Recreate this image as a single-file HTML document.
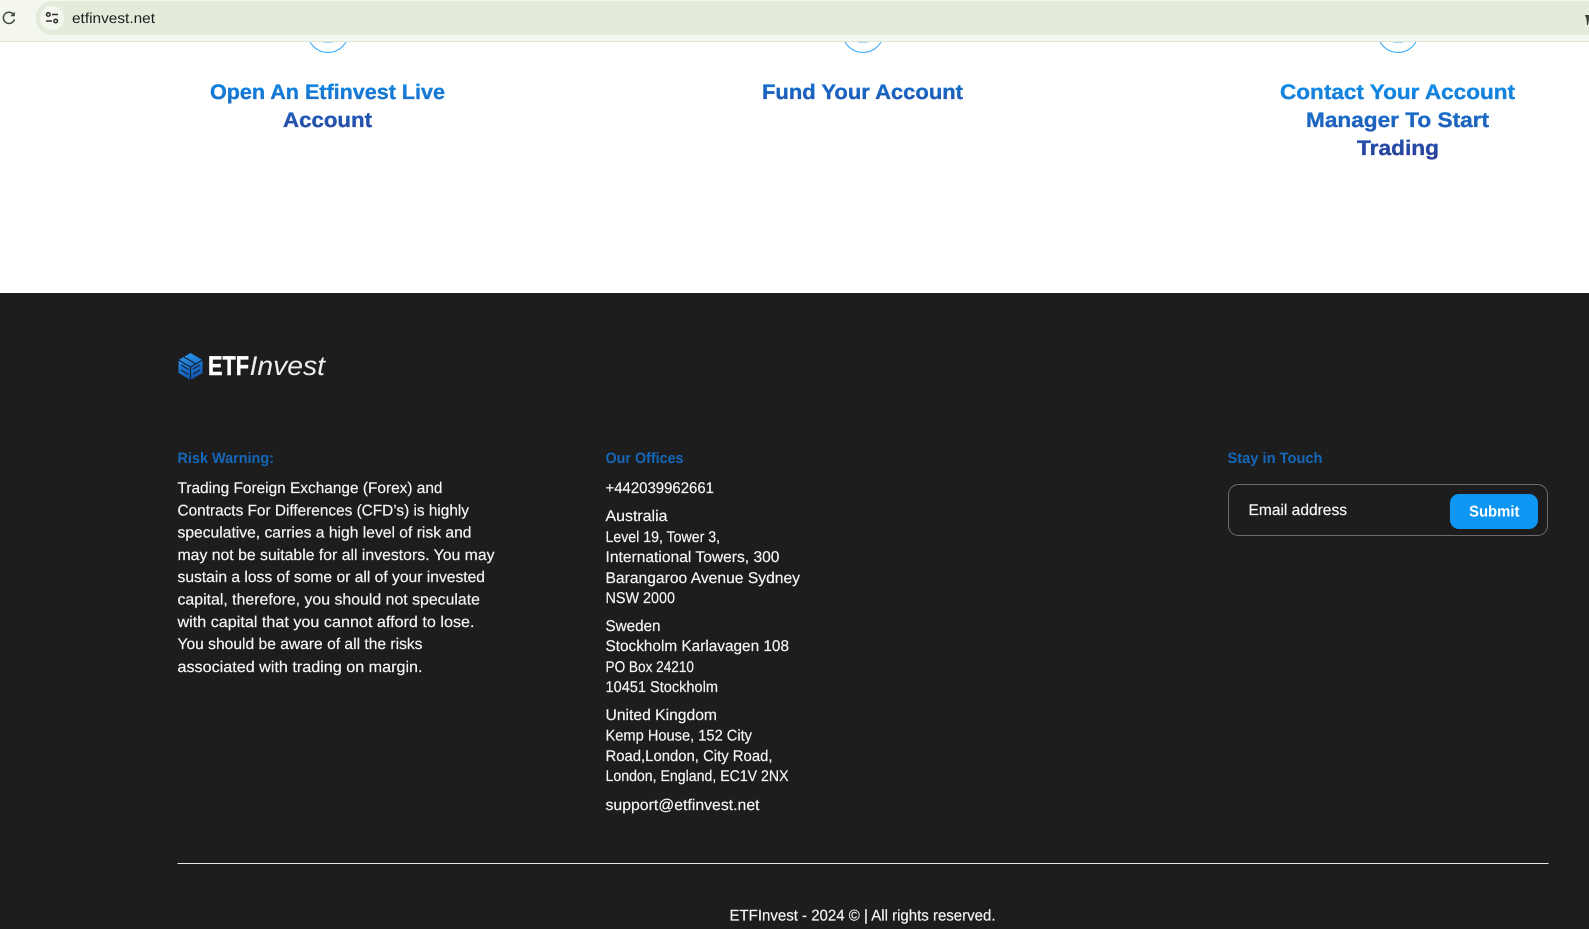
<!DOCTYPE html>
<html lang="en"><head><meta charset="utf-8"><title>etfinvest.net</title>
<style>
html,body{margin:0;padding:0;width:1589px;height:929px;overflow:hidden;background:#fff}
svg{display:block;position:absolute;left:0;top:0}
text{font-family:"Liberation Sans",sans-serif;text-rendering:geometricPrecision}
.h{font-size:21px;font-weight:700;stroke-width:.35px}
.t{font-size:15.5px;fill:#f6f6f6;stroke:#f6f6f6;stroke-width:.18px}
.b{font-size:15px;font-weight:700;fill:#1567b8}
</style></head><body>
<svg width="1589" height="929" viewBox="0 0 1589 929" xmlns="http://www.w3.org/2000/svg">
<defs>
<linearGradient id="g1" gradientUnits="userSpaceOnUse" x1="0" y1="78" x2="0" y2="136"><stop offset="0" stop-color="#0d8eeb"/><stop offset="1" stop-color="#2b3f9a"/></linearGradient>
<linearGradient id="g2" gradientUnits="userSpaceOnUse" x1="0" y1="72" x2="0" y2="112"><stop offset="0" stop-color="#1181e0"/><stop offset="1" stop-color="#2347a3"/></linearGradient>
<linearGradient id="g3" gradientUnits="userSpaceOnUse" x1="0" y1="78" x2="0" y2="162"><stop offset="0" stop-color="#0d94ef"/><stop offset="1" stop-color="#2b3a94"/></linearGradient>
<linearGradient id="c" x1="0" y1="0" x2="0.3" y2="1"><stop offset="0" stop-color="#2a9af0"/><stop offset="1" stop-color="#1558b0"/></linearGradient>
</defs>

<!-- circles -->
<g fill="none" stroke="#2ea6f7" stroke-width="1"><circle cx="328" cy="32" r="20.500"/><circle cx="863" cy="32" r="20.500"/><circle cx="1398" cy="32" r="20.500"/></g>
<g fill="#a0d6fa"><rect x="323" y="42" width="10" height="1" rx=".5"/><rect x="858" y="42" width="10" height="1" rx=".5"/><rect x="1393" y="42" width="10" height="1" rx=".5"/></g>

<!-- browser bar -->
<rect x="0" y="0" width="1589" height="41" fill="#f4f7ee"/>
<rect x="0" y="41" width="1589" height="1" fill="#e1e5d8"/>
<path d="M1589 1H52.500A17 17 0 0 0 35.500 18A17 17 0 0 0 52.500 35H1589Z" fill="#e3ebdb"/>
<circle cx="52" cy="18" r="12" fill="#f4f7ee"/>
<g fill="none" stroke="#2b2f2b" stroke-width="1.500"><circle cx="48.300" cy="14.500" r="1.800"/><circle cx="55.700" cy="21" r="1.800"/><path d="M52 14.500H58M46 21H52"/></g>
<path d="M13.300 14.300A5.600 5.600 0 1 0 14.400 19.300" fill="none" stroke="#3f4a3f" stroke-width="1.500"/>
<path d="M14.800 11.600V16.200H10.200Z" fill="#3f4a3f"/>
<text x="72" y="23" font-size="14.500" fill="#1c1f1c" textLength="83" lengthAdjust="spacingAndGlyphs">etfinvest.net</text>
<path d="M1585 15H1589V19L1588 25H1587L1586.500 19Z" fill="#3a3f3a"/>

<!-- headings -->
<text class="h" x="210" y="99" fill="url(#g1)" stroke="url(#g1)" textLength="235" lengthAdjust="spacingAndGlyphs">Open An Etfinvest Live</text>
<text class="h" x="283" y="127" fill="url(#g1)" stroke="url(#g1)" textLength="89" lengthAdjust="spacingAndGlyphs">Account</text>
<text class="h" x="762" y="99" fill="url(#g2)" stroke="url(#g2)" textLength="201" lengthAdjust="spacingAndGlyphs">Fund Your Account</text>
<text class="h" x="1280" y="99" fill="url(#g3)" stroke="url(#g3)" textLength="235" lengthAdjust="spacingAndGlyphs">Contact Your Account</text>
<text class="h" x="1306" y="127" fill="url(#g3)" stroke="url(#g3)" textLength="183" lengthAdjust="spacingAndGlyphs">Manager To Start</text>
<text class="h" x="1357" y="155" fill="url(#g3)" stroke="url(#g3)" textLength="82" lengthAdjust="spacingAndGlyphs">Trading</text>

<!-- footer -->
<rect x="0" y="293" width="1589" height="636" fill="#1d1d1d"/>

<!-- logo -->
<path d="M190.500 353L202.500 360V373L190.500 380L178.500 373V360Z" fill="url(#c)"/>
<g fill="none" stroke="#14233a" stroke-width="1.200"><path d="M178.500 360L190.500 367L202.500 360M190.500 367V380"/><path d="M184 357L196 364M181 365L188.500 369.500M181 370L188.500 374.500M193 369L200 365M193 374L200 370"/></g>
<text x="208" y="375" font-size="27" font-weight="700" fill="#fff" stroke="#fff" stroke-width=".5" textLength="41" lengthAdjust="spacingAndGlyphs">ETF</text>
<text x="249.500" y="375" font-size="27" font-style="italic" fill="#eeeeee" textLength="75.500" lengthAdjust="spacingAndGlyphs">Invest</text>

<!-- risk warning -->
<text class="b" x="177.500" y="463" textLength="96.500" lengthAdjust="spacingAndGlyphs">Risk Warning:</text>
<text class="t" x="177.500" y="493" textLength="265" lengthAdjust="spacingAndGlyphs">Trading Foreign Exchange (Forex) and</text>
<text class="t" x="177.500" y="515.400" textLength="291.500" lengthAdjust="spacingAndGlyphs">Contracts For Differences (CFD’s) is highly</text>
<text class="t" x="177.500" y="537.500" textLength="294" lengthAdjust="spacingAndGlyphs">speculative, carries a high level of risk and</text>
<text class="t" x="177.500" y="560" textLength="317" lengthAdjust="spacingAndGlyphs">may not be suitable for all investors. You may</text>
<text class="t" x="177.500" y="582" textLength="307.500" lengthAdjust="spacingAndGlyphs">sustain a loss of some or all of your invested</text>
<text class="t" x="177.500" y="604.500" textLength="302.500" lengthAdjust="spacingAndGlyphs">capital, therefore, you should not speculate</text>
<text class="t" x="177.500" y="627" textLength="297" lengthAdjust="spacingAndGlyphs">with capital that you cannot afford to lose.</text>
<text class="t" x="177.500" y="649" textLength="245" lengthAdjust="spacingAndGlyphs">You should be aware of all the risks</text>
<text class="t" x="177.500" y="672" textLength="245" lengthAdjust="spacingAndGlyphs">associated with trading on margin.</text>

<!-- offices -->
<text class="b" x="605.500" y="463" textLength="78" lengthAdjust="spacingAndGlyphs">Our Offices</text>
<text class="t" x="605.500" y="493" textLength="108.500" lengthAdjust="spacingAndGlyphs">+442039962661</text>
<text class="t" x="605.500" y="521" textLength="62" lengthAdjust="spacingAndGlyphs">Australia</text>
<text class="t" x="605.500" y="542" textLength="114.500" lengthAdjust="spacingAndGlyphs">Level 19, Tower 3,</text>
<text class="t" x="605.500" y="562" textLength="174" lengthAdjust="spacingAndGlyphs">International Towers, 300</text>
<text class="t" x="605.500" y="583" textLength="194.500" lengthAdjust="spacingAndGlyphs">Barangaroo Avenue Sydney</text>
<text class="t" x="605.500" y="603" textLength="69.500" lengthAdjust="spacingAndGlyphs">NSW 2000</text>
<text class="t" x="605.500" y="631" textLength="55" lengthAdjust="spacingAndGlyphs">Sweden</text>
<text class="t" x="605.500" y="651" textLength="183.500" lengthAdjust="spacingAndGlyphs">Stockholm Karlavagen 108</text>
<text class="t" x="605.500" y="672" textLength="88.500" lengthAdjust="spacingAndGlyphs">PO Box 24210</text>
<text class="t" x="605.500" y="692" textLength="112.500" lengthAdjust="spacingAndGlyphs">10451 Stockholm</text>
<text class="t" x="605.500" y="720" textLength="111.500" lengthAdjust="spacingAndGlyphs">United Kingdom</text>
<text class="t" x="605.500" y="740.300" textLength="146.500" lengthAdjust="spacingAndGlyphs">Kemp House, 152 City</text>
<text class="t" x="605.500" y="761" textLength="167" lengthAdjust="spacingAndGlyphs">Road,London, City Road,</text>
<text class="t" x="605.500" y="781" textLength="183" lengthAdjust="spacingAndGlyphs">London, England, EC1V 2NX</text>
<text class="t" x="605.500" y="810" textLength="154" lengthAdjust="spacingAndGlyphs">support@etfinvest.net</text>

<!-- stay in touch -->
<text class="b" x="1227.500" y="463" textLength="95" lengthAdjust="spacingAndGlyphs">Stay in Touch</text>
<rect x="1228.500" y="484.500" width="319" height="51" rx="10" fill="none" stroke="#6b6b6b"/>
<text class="t" x="1248.500" y="515" textLength="98.500" lengthAdjust="spacingAndGlyphs">Email address</text>
<rect x="1450" y="494" width="88" height="35" rx="9" fill="#0d96f2"/>
<text x="1469" y="516.500" font-size="15.500" font-weight="700" fill="#fff" textLength="50.500" lengthAdjust="spacingAndGlyphs">Submit</text>

<!-- bottom -->
<rect x="177.500" y="863" width="1371" height="1" fill="#e8e8e8"/>
<text class="t" x="729.500" y="920.700" textLength="266" lengthAdjust="spacingAndGlyphs">ETFInvest - 2024 © | All rights reserved.</text>
</svg>
</body></html>
